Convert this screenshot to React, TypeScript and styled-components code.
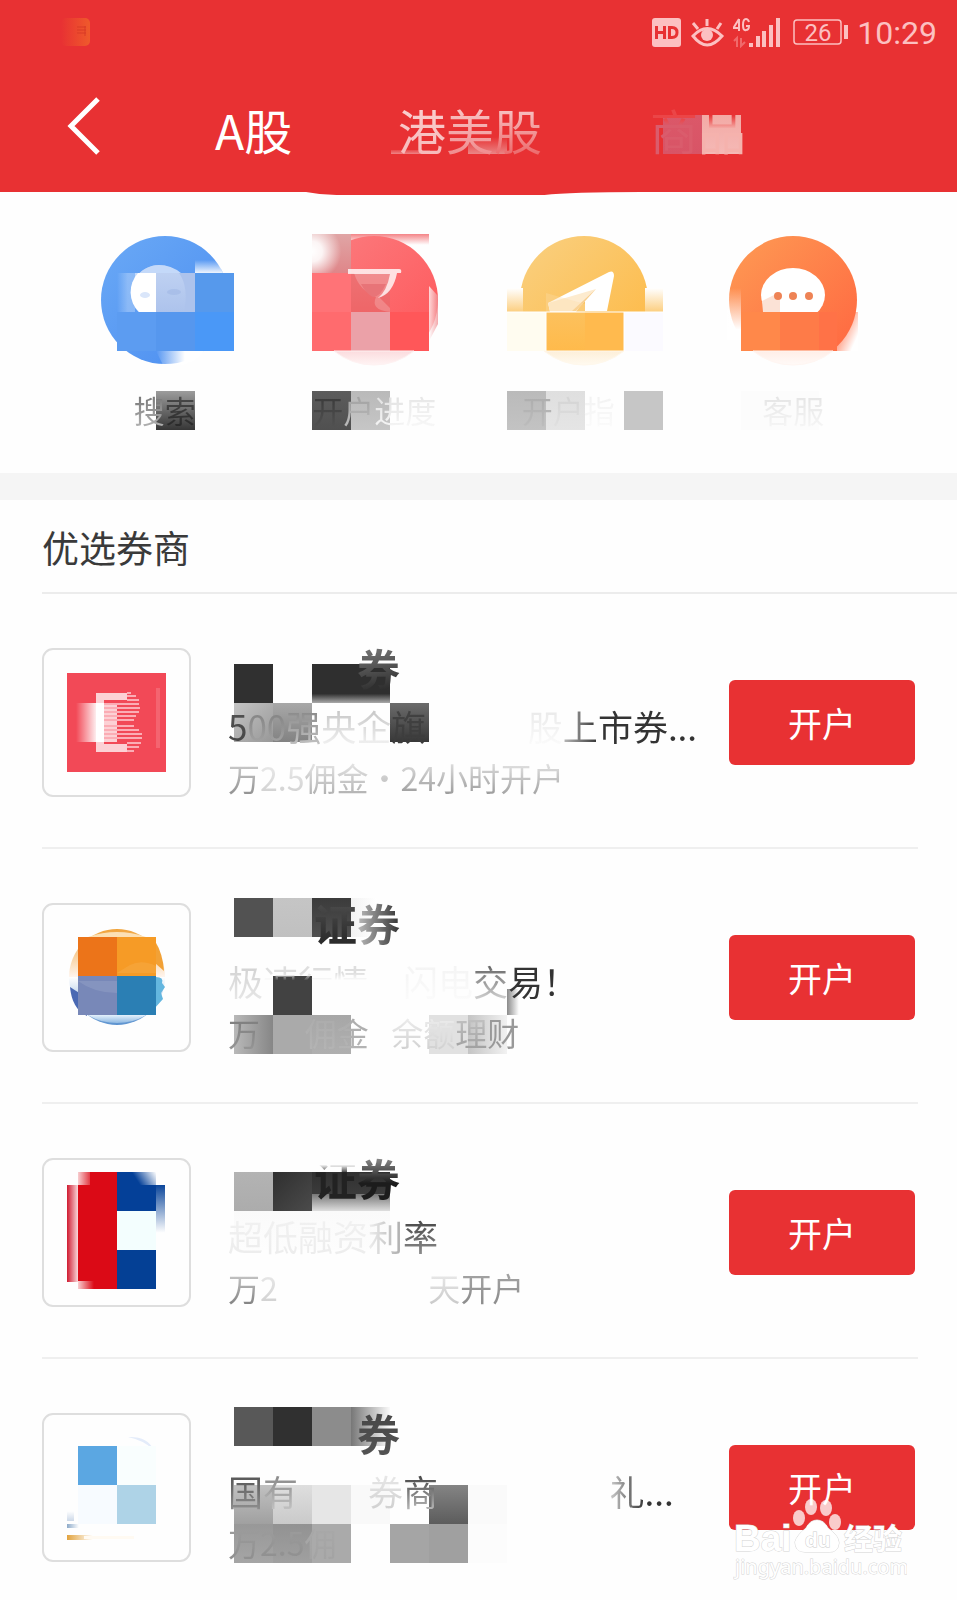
import React, { useId } from "react";
import styled, { createGlobalStyle } from "styled-components";

const RED = "#e83133";
const PALE = "#fcc0c1";

const GlobalStyle = createGlobalStyle`
  *, *::before, *::after { box-sizing: border-box; }
  body {
    margin: 0;
    background: #fefefe;
    color: #3a3a3a;
    font-family: "Noto Sans CJK SC", "Noto Sans", sans-serif;
    font-weight: 400;
  }
  button { font: inherit; border: 0; padding: 0; background: none; cursor: pointer; }
`;

const Page = styled.div`
  position: relative;
  overflow: hidden;
`;

const Header = styled.header`
  position: relative;
  background: ${RED};
  height: 192px;
`;

const StatusBar = styled.div`
  display: flex;
  align-items: center;
  justify-content: flex-end;
  height: 66px;
  padding: 0 20px 0 60px;
  color: ${PALE};
`;

const StatusLeft = styled.span`
  flex: 1;
  display: flex;
`;

const StatusIcon = styled.svg<{ $gap: number }>`
  flex: none;
  margin-right: ${(p) => p.$gap}px;
`;

const Clock = styled.time`
  font: 400 32px/40px Roboto, sans-serif;
`;

const Nav = styled.nav`
  display: flex;
  align-items: center;
  height: 126px;
  padding-left: 64px;
`;

const Back = styled.button`
  width: 38px;
  height: 60px;
  margin: 0 113px 8px 0;
  svg { display: block; }
`;

const Tab = styled.button<{ $color: string; $width: number }>`
  position: relative;
  width: ${(p) => p.$width}px;
  text-align: left;
  white-space: nowrap;
  font-size: 48px;
  line-height: 62px;
  color: ${(p) => p.$color};
`;

const Indicator = styled.svg`
  position: absolute;
  top: 100%;
  left: 32%;
  width: 35%;
  height: 3px;
`;

const Shortcuts = styled.section`
  display: grid;
  grid-template-columns: repeat(4, 1fr);
  padding: 44px 59px 43px 60px;
`;

const Shortcut = styled.button`
  display: flex;
  flex-direction: column;
  align-items: center;
  gap: 25px;
`;

const ShortcutArt = styled.svg`
  width: 128px;
  height: 128px;
  overflow: visible;
`;

const ShortcutLabel = styled.span`
  position: relative;
  font-size: 31px;
  line-height: 41px;
  white-space: nowrap;
`;

const Band = styled.div`
  height: 27px;
  background: #f5f5f5;
`;

const SectionTitle = styled.h2`
  margin: 0 0 0 42px;
  padding-top: 3px;
  border-bottom: 2px solid #ececec;
  font-size: 37px;
  font-weight: 400;
  line-height: 89px;
`;

const List = styled.ul`
  list-style: none;
  margin: 0;
  padding: 0 39px 0 42px;
`;

const Broker = styled.li`
  display: flex;
  align-items: flex-start;
  padding: 54px 3px 47px 0;
  border-bottom: 2px solid #efefef;
  &:last-child { border-bottom: 0; padding-bottom: 35px; }
`;

const LogoBox = styled.div`
  flex: none;
  width: 149px;
  height: 149px;
  border: 2px solid #dedede;
  border-radius: 11px;
  svg { display: block; overflow: visible; }
`;

const Info = styled.div`
  position: relative;
  flex: 1;
  min-width: 0;
  margin-left: 37px;
  white-space: nowrap;
`;

const Name = styled.h3`
  position: relative;
  margin: 0 0 12px;
  font-size: 43px;
  font-weight: 700;
  line-height: 38px;
`;

const Slogan = styled.p`
  position: relative;
  margin: 0;
  font-size: 35px;
  line-height: 56px;
`;

const Terms = styled.p`
  position: relative;
  margin: 0;
  font-size: 32px;
  line-height: 46px;
`;

const Shade = styled.span<{ $from: string; $to: string; $dir: string }>`
  position: relative;
  color: transparent;
  background: linear-gradient(${(p) => p.$dir}, ${(p) => p.$from}, ${(p) => p.$to});
  -webkit-background-clip: text;
  background-clip: text;
`;

const Blank = styled.span<{ $chars: number }>`
  display: inline-block;
  width: ${(p) => p.$chars}em;
`;

const OpenButton = styled.button`
  flex: none;
  width: 186px;
  height: 85px;
  margin-top: 32px;
  border-radius: 6px;
  background: ${RED};
  color: #fff;
  font-size: 34px;
  line-height: 84px;
`;

const MosaicArt = styled.svg`
  position: absolute;
  left: 0;
  top: 0;
  width: 1px;
  height: 1px;
  overflow: visible;
  pointer-events: none;
`;

const Watermark = styled.svg`
  position: absolute;
  right: 50px;
  bottom: 16px;
  width: 174px;
  height: 88px;
  pointer-events: none;
`;

/* x, y, width, height, start colour, end colour, gradient direction */
type Tile = [number, number, number, number, string, string?, ("down" | "right" | "diag")?];

function Tiles({ tiles }: { tiles: Tile[] }) {
  const id = useId();
  return (
    <g shapeRendering="crispEdges">
      {tiles.map(([x, y, w, h, from, to, dir = "down"], i) => (
        <g key={i}>
          {to && (
            <linearGradient
              id={`${id}${i}`}
              x1="0"
              y1="0"
              x2={dir === "down" ? "0" : "1"}
              y2={dir === "right" ? "0" : "1"}
            >
              <stop offset="0" stopColor={from} />
              <stop offset="1" stopColor={to} />
            </linearGradient>
          )}
          <rect x={x} y={y} width={w} height={h} fill={to ? `url(#${id}${i})` : from} />
        </g>
      ))}
    </g>
  );
}

function Mosaic({ tiles }: { tiles: Tile[] }) {
  return (
    <MosaicArt aria-hidden="true">
      <Tiles tiles={tiles} />
    </MosaicArt>
  );
}

/* A number leaves that many characters blank; a tuple is text with its shading. */
type Part = number | [string, string, string?, string?];

function Parts({ parts }: { parts: Part[] }) {
  return (
    <>
      {parts.map((p, i) =>
        typeof p === "number" ? (
          <Blank key={i} $chars={p} />
        ) : (
          <Shade key={i} $from={p[1]} $to={p[2] ?? p[1]} $dir={p[3] ?? "to bottom"}>
            {p[0]}
          </Shade>
        )
      )}
    </>
  );
}

function Grad({ id, from, to, diag = false, flat = false }: { id: string; from: string; to: string; diag?: boolean; flat?: boolean }) {
  return (
    <linearGradient id={id} x1="0" y1="0" x2={diag || flat ? "1" : "0"} y2={flat ? "0" : "1"}>
      <stop offset="0" stopColor={from} />
      <stop offset="1" stopColor={to} />
    </linearGradient>
  );
}

function SearchArt() {
  return (
    <ShortcutArt viewBox="0 0 128 128">
      <Grad id="s1" from="#6aa9f6" to="#4b8df0" diag />
      <linearGradient id="s2" x1="0" y1="0" x2="1" y2="0">
        <stop offset="0" stopColor="#fff" stopOpacity="0" />
        <stop offset="0.6" stopColor="#fff" />
      </linearGradient>
      <linearGradient id="s4" x1="0" y1="1" x2="0" y2="0">
        <stop offset="0" stopColor="#fff" stopOpacity="0.9" />
        <stop offset="1" stopColor="#fff" stopOpacity="0" />
      </linearGradient>
      <Grad id="s3" from="#d8e5fa" to="#adc3ec" />
      <circle cx="64" cy="64" r="64" fill="url(#s1)" />
      <path d="M16 37H34V76H16Z" fill="url(#s2)" opacity="0.28" />
      <circle cx="58" cy="57" r="28" fill="#a9c6f4" />
      <path d="M58 29A28 28 0 0 0 34 43V37H80Q70 29 58 29Z" fill="#c4d9f9" />
      <path d="M55 37V76H38A28 28 0 0 1 37 37Z" fill="#fff" />
      <ellipse cx="44" cy="59" rx="5" ry="3" fill="#dae6fa" />
      <path d="M94 24H116L122 37H94Z" fill="url(#s4)" />
      <Tiles tiles={[[94, 37, 39, 39, "#5699ec"], [16, 76, 39, 39, "#5c9cf1"], [55, 76, 39, 39, "#5697ee"], [94, 76, 39, 39, "#4a98f7"]]} />
      <path d="M55 37H94V76H55Z" fill="#adc3ec" />
      <path d="M55 37H78Q88 51 83 76H55Z" fill="url(#s3)" opacity="0.4" />
      <ellipse cx="73" cy="56" rx="7" ry="3" fill="#a4bbe7" opacity="0.7" />
      <path d="M55 115H103Q98 124 82 129H62Z" fill="url(#s2)" />
    </ShortcutArt>
  );
}

function ProgressArt() {
  return (
    <ShortcutArt viewBox="0 0 128 128">
      <Grad id="p1" from="#fb7d80" to="#ff5558" diag />
      <Grad id="p2" from="#ffffff" to="#f08c90" flat />
      <Grad id="p3" from="#fbdcde" to="#fff4f4" />
      <Grad id="p4" from="#e0a5a5" to="#df8689" />
      <Grad id="p5" from="#f48487" to="#ffffff" />
      <radialGradient id="p6" cx="0" cy="0.45" r="0.75">
        <stop offset="0" stopColor="#fff" />
        <stop offset="0.35" stopColor="#fff" stopOpacity="0.9" />
        <stop offset="1" stopColor="#fff" stopOpacity="0" />
      </radialGradient>
      <path d="M41 -2H119V9H41Z" fill="url(#p5)" />
      <circle cx="64" cy="64" r="64" fill="url(#p1)" />
      <path d="M0 36H2V90H0Z" fill="#fefefe" />
      <path d="M2 -2H41V37H2Z" fill="url(#p4)" />
      <path d="M2 -2H41V37H2Z" fill="url(#p6)" />
      <Tiles tiles={[[2, 37, 39, 39, "#ff7377"], [41, 37, 39, 39, "#ee7173", "#ee6668"], [2, 76, 39, 39, "#ff6b6e"], [41, 76, 39, 39, "#eba1a8"], [80, 76, 39, 39, "#ff5759"]]} />
      <path d="M38 33H89Q92 33 91 37H87Q83 57 69 61L80 72V76Q60 74 66 61Q49 54 44 37H38Z" fill="#fff" opacity="0.2" />
      <path d="M38 33H89Q92 33 91 37H87Q83 58 68 62Q77 55 80 38H38Z" fill="#fff" opacity="0.75" />
      <path d="M51 48H76Q70 61 63 61Q56 58 51 48Z" fill="#e87478" />
      <path d="M119 50L128 60V88L119 105Z" fill="url(#p2)" opacity="0.75" />
      <path d="M24 115H104A64 64 0 0 1 24 115Z" fill="url(#p3)" stroke="#fef2f2" />
    </ShortcutArt>
  );
}

function GuideArt() {
  return (
    <ShortcutArt viewBox="0 0 128 128">
      <Grad id="g1" from="#f9d081" to="#feb842" diag />
      <Grad id="g2" from="#fff" to="#fcce7f" />
      <Grad id="g3" from="#fdefd9" to="#fffaf0" />
      <circle cx="64" cy="64" r="64" fill="url(#g1)" />
      <path d="M-13 52H3V76H-13ZM125 52H143V76H125Z" fill="url(#g2)" />
      <path d="M28 67L89 36Q94 34 94 40L87 75H65V62L56 76H30Z" fill="#fff" />
      <path d="M28 67L76 53L56 75H30Z" fill="#fdebcf" />
      <path d="M76 53L56 75H52Z" fill="#f7cd8d" />
      <path d="M26 57V76H65V68Z" fill="#fddda5" opacity="0.35" />
      <Tiles tiles={[[-13, 76, 39, 39, "#fffcf0"], [26, 76, 39, 39, "#fcc15d", "#ffba4b"], [65, 76, 39, 39, "#ffba4e"], [104, 76, 39, 39, "#fbfaff"]]} />
      <path d="M-13 76H143M26 76V115M104 76V115" stroke="#fff" />
      <path d="M24 115H104A64 64 0 0 1 24 115Z" fill="url(#g3)" stroke="#fff8ec" />
    </ShortcutArt>
  );
}

function ServiceArt() {
  return (
    <ShortcutArt viewBox="0 0 128 128">
      <Grad id="c1" from="#fe9b54" to="#ff6540" diag />
      <linearGradient id="c2" x1="0" y1="0" x2="0" y2="1">
        <stop offset="0" stopColor="#fff" stopOpacity="0" />
        <stop offset="0.8" stopColor="#fff" />
      </linearGradient>
      <Grad id="c3" from="#ffeee7" to="#fffaf8" />
      <linearGradient id="c4" x1="0" y1="0" x2="1" y2="0.6">
        <stop offset="0.3" stopColor="#ff6b43" />
        <stop offset="1" stopColor="#fff" />
      </linearGradient>
      <path d="M100 76H129V115H100Z" fill="url(#c4)" />
      <circle cx="64" cy="64" r="64" fill="url(#c1)" />
      <path d="M-2 52H12V104H-2Z" fill="url(#c2)" />
      <ellipse cx="64" cy="59" rx="32" ry="27" fill="#fff" />
      <path d="M33 65L51 56V76H34Z" fill="#fbe2d6" />
      <Tiles tiles={[[12, 76, 39, 39, "#ff884a"], [51, 76, 39, 39, "#fe7b48"], [90, 76, 18, 39, "#ff7247"]]} />
      <g fill="#ee8355">
        <circle cx="49" cy="60" r="4" />
        <circle cx="64" cy="60" r="4" />
        <circle cx="80" cy="60" r="4" />
      </g>
      <path d="M24 115H104A64 64 0 0 1 24 115Z" fill="url(#c3)" stroke="#fff6f2" />
    </ShortcutArt>
  );
}

const shortcuts: { art: React.ReactNode; parts: Part[]; tiles: Tile[] }[] = [
  {
    art: <SearchArt />,
    parts: [["搜", "#666", "#bbb"], ["索", "#555", "#222"]],
    tiles: [[22, 2, 39, 39, "#9c9c9c", "#363636"]],
  },
  {
    art: <ProgressArt />,
    parts: [["开", "#333", "#555"], ["户", "#999", "#c0c0c0"], ["进", "#dcdcdc", "#f8f8f8"], ["度", "#e2e2e2", "#fafafa"]],
    tiles: [[0, 2, 39, 39, "#5c5c5c", "#505050"], [39, 2, 39, 39, "#b9b9b9", "#c6c6c6"]],
  },
  {
    art: <GuideArt />,
    parts: [["开", "#a8a8a8", "#bfbfbf"], ["户", "#d0d0d0", "#e2e2e2"], ["指", "#f0f0f0", "#fcfcfc"], 1],
    tiles: [[-15, 2, 39, 39, "#bababa", "#c3c3c3"], [24, 2, 39, 39, "#dfdfdf", "#e5e5e5"], [102, 2, 39, 39, "#c6c6c6"]],
  },
  {
    art: <ServiceArt />,
    parts: [["客服", "#e0e0e0", "#f8f8f8"]],
    tiles: [[-21, 2, 78, 39, "#fcfcfc"]],
  },
];

function RedLogo() {
  return (
    <svg width="145" height="145" viewBox="0 0 145 145">
      <linearGradient id="r1"><stop offset="0" stopColor="#fff" stopOpacity="0" /><stop offset="1" stopColor="#fff" stopOpacity="0.9" /></linearGradient>
      <path d="M23 23H122V122H23Z" fill="#f24957" />
      <path d="M32 53H52V92H32Z" fill="url(#r1)" />
      <path d="M112 38H116V98H112Z" fill="#fff" opacity="0.15" />
      <path d="M52 43H83V50H60V53H73V92H60V94H83V102H52Z" fill="#fff" opacity="0.75" />
      <path d="M52 53H60V92H52Z" fill="#fff" />
      <path d="M83 43H87M83 46H92M83 50H95M60 54H95M60 58H96M60 62H95M60 66H92M60 70H90M60 76H90M60 80H95M60 84H98M60 88H98M83 93H97M83 97H95M83 101H90" stroke="#fbadb5" strokeWidth="2" />
    </svg>
  );
}

function GlobeLogo() {
  return (
    <svg width="145" height="145" viewBox="0 0 145 145">
      <linearGradient id="b1" x1="0" y1="0" x2="0" y2="1"><stop offset="0" stopColor="#f0a33a" /><stop offset="0.5" stopColor="#fff5ee" /><stop offset="0.5" stopColor="#fff" /><stop offset="1" stopColor="#5b92cf" /></linearGradient>
      <linearGradient id="b2" x1="0" y1="0" x2="0" y2="1"><stop offset="0" stopColor="#e4f1fc" /><stop offset="1" stopColor="#8fb9e2" /></linearGradient>
      <circle cx="73" cy="72" r="48" fill="url(#b1)" />
      <path d="M44 32Q73 22 102 32Z" fill="#fce0b4" />
      <path d="M111 36Q119 49 120 66L111 58Z" fill="#f2a136" />
      <path d="M26 82Q28 104 43 111V93Z" fill="#4a69b3" />
      <path d="M112 72Q120 72 118 78L121 82L117 88L119 94L110 104Z" fill="#64b6df" />
      <Tiles tiles={[[34, 32, 39, 39, "#ec7419"], [73, 32, 39, 39, "#f69b26"], [34, 71, 39, 39, "#7888b8"], [73, 71, 39, 39, "#2b7fb4"]]} />
      <path d="M86 60Q98 54 112 61V68H73Z" fill="#f8ae50" opacity="0.4" />
      <path d="M34 76Q50 88 73 88V76Z" fill="#a5afd2" opacity="0.3" />
      <path d="M44 110H102Q90 118 73 118T44 110Z" fill="url(#b2)" />
    </svg>
  );
}

function FlagLogo() {
  return (
    <svg width="145" height="145" viewBox="0 0 145 145">
      <linearGradient id="f1" x1="0" y1="0.3" x2="1" y2="0"><stop offset="0.2" stopColor="#fff" stopOpacity="0" /><stop offset="1" stopColor="#fff" /></linearGradient>
      <linearGradient id="f2" x1="1" y1="0" x2="0" y2="0"><stop offset="0" stopColor="#fff" stopOpacity="0" /><stop offset="1" stopColor="#fff" stopOpacity="0.8" /></linearGradient>
      <Tiles tiles={[[23, 25, 11, 97, "#d01a30", "#f9d8da", "right"], [34, 12, 39, 117, "#db0a16"], [73, 12, 39, 39, "#044098"], [73, 51, 39, 39, "#f3fefe"], [73, 90, 39, 39, "#044095"], [112, 25, 9, 48, "#0b469b", "#fff"]]} />
      <path d="M84 12H112V25H84Z" fill="url(#f1)" />
      <path d="M34 12H46V25H34ZM34 121H50V129H34Z" fill="url(#f2)" />
    </svg>
  );
}

function BlueLogo() {
  return (
    <svg width="145" height="145" viewBox="0 0 145 145">
      <path d="M84 22Q103 21 110 35Q99 25 84 22Z" fill="#e4ecfa" />
      <Tiles tiles={[[34, 31, 39, 39, "#5ba7e2"], [73, 31, 39, 39, "#f9fefe"], [34, 70, 39, 39, "#f7fbff"], [73, 70, 39, 39, "#aed3e7"], [23, 96, 7, 10, "#fff", "#ccd8e8"], [23, 109, 12, 4, "#8daac9", "#fff", "right"], [23, 120, 26, 5, "#e2a33e", "#fff", "right"], [40, 121, 50, 3, "#fffaf2"]]} />
    </svg>
  );
}

type BrokerData = { logo: React.ReactNode; tiles: Tile[]; name: Part[]; slogan: Part[]; terms: Part[] };

const brokers: BrokerData[] = [
  {
    logo: <RedLogo />,
    tiles: [
      [6, 16, 39, 39, "#303030"],
      [84, 16, 78, 30, "#2f2f2f"],
      [84, 46, 78, 9, "#333", "#aaa"],
      [6, 55, 39, 39, "#c4c4c4", "#989898", "diag"],
      [45, 55, 39, 39, "#a8a8a8", "#828282"],
      [162, 55, 39, 39, "#6b6b6b", "#383838"],
    ],
    name: [3, ["券", "#8a8a8a", "#1c1c1c", "170deg"]],
    slogan: [["5", "#555", "#444"], ["00", "#777", "#aaa"], ["强", "#777", "#ccc"], ["央企", "#bbb", "#f8f8f8"], ["旗", "#444", "#3a3a3a"], 2.9, ["股", "#e4e4e4", "#fefefe"], ["上", "#bbb", "#333", "to right"], ["市券...", "#333"]],
    terms: [["万", "#ddd", "#888"], ["2.5", "#f2f2f2", "#ccc"], ["佣金·", "#f2f2f2", "#aaa"], ["24小时", "#f0f0f0", "#909090"], ["开户", "#f4f4f4", "#999"]],
  },
  {
    logo: <GlobeLogo />,
    tiles: [
      [6, -5, 39, 39, "#525252"],
      [45, -5, 39, 39, "#c5c5c5", "#c0c0c0"],
      [84, -5, 39, 39, "#3b3b3b", "#505050"],
      [123, -5, 26, 39, "#f2f2f2", "#ffffff", "right"],
      [45, 73, 39, 39, "#424242"],
      [279, 86, 12, 26, "#8a8a8a", "#ffffff", "right"],
      [6, 112, 39, 39, "#b9b9b9", "#868686", "right"],
      [45, 112, 39, 39, "#aaa"],
      [84, 112, 39, 39, "#a7a7a7", "#afafaf"],
      [201, 112, 39, 39, "#e1e1e1"],
      [240, 112, 39, 39, "#c4c4c4", "#f2f2f2", "right"],
    ],
    name: [2, ["证", "#555", "#222"], ["券", "#bbb", "#333", "to right"]],
    slogan: [["极", "#ccc", "#eaeaea"], ["速行情", "#dedede 35%", "transparent 50%"], 1, ["闪电", "#f2f2f2", "#fcfcfc"], ["交", "#444", "#e6e6e6"], ["易！", "#333"]],
    terms: [["万", "#777", "#999"], 1.4, ["佣金", "#aaa", "#b5b5b5"], 0.7, ["余额", "#f4f4f4", "#ccc"], ["理", "#ccc", "#999"], ["财", "#999"]],
  },
  {
    logo: <FlagLogo />,
    tiles: [
      [6, 14, 39, 39, "#b3b3b3", "#acacac"],
      [45, 14, 39, 39, "#2f2f2f", "#4b4b4b", "diag"],
      [84, 14, 78, 22, "#303030", "#3b3b3b"],
      [84, 36, 78, 17, "#777", "#dedede"],
      [6, 53, 156, 39, "#fafafa", "#fdfdfd"],
    ],
    name: [2, ["证", "transparent 30%", "#222 45%"], ["券", "#c0c0c0", "#1c1c1c 60%"]],
    slogan: [["超低融资", "#f2f2f2", "#ececec"], ["利", "#f0f0f0", "#aaa", "to right"], ["率", "#333", "#999"]],
    terms: [["万", "#ddd", "#777"], ["2", "#f0f0f0", "#ccc"], 4.7, ["天", "#f2f2f2", "#c4c4c4"], ["开户", "#aaa", "#888"]],
  },
  {
    logo: <BlueLogo />,
    tiles: [
      [6, -6, 39, 39, "#585858"],
      [45, -6, 39, 39, "#303030"],
      [84, -6, 39, 39, "#8c8c8c"],
      [123, -6, 39, 39, "#777", "#fafafa", "right"],
      [6, 72, 39, 39, "#c1c1c1", "#a0a0a0"],
      [45, 72, 39, 39, "#dedede", "#cacaca"],
      [84, 72, 39, 39, "#e6e6e6"],
      [123, 72, 39, 39, "#f9f9f9"],
      [201, 72, 39, 39, "#848484", "#5c5c5c"],
      [240, 72, 39, 39, "#fafafa"],
      [6, 111, 39, 39, "#989898", "#a5a5a5"],
      [45, 111, 39, 39, "#929292", "#a0a0a0"],
      [84, 111, 39, 39, "#aaa"],
      [162, 111, 39, 39, "#a5a5a5"],
      [201, 111, 39, 39, "#a0a0a0"],
      [240, 111, 39, 39, "#fcfcfc"],
    ],
    name: [3, ["券", "#444", "#555"]],
    slogan: [["国", "#444", "#999"], ["有", "#777", "#ccc"], 2, ["券", "#eee", "#ccc"], ["商", "#222", "#ccc"], 4.9, ["礼", "#ccc", "#333", "to right"], ["...", "#333"]],
    terms: [["万2.5", "#a0a0a0", "#8d8d8d"], ["佣", "#aaa", "#a2a2a2"]],
  },
];

function StatusIcons() {
  return (
    <>
      <StatusIcon width="30" height="30" $gap={9} role="img" aria-label="HD">
        <rect width="29" height="29" rx="3" fill={PALE} />
        <path d="M4.500 8V21M12.500 8V21M4.500 14.500H12.500M17.500 9.500V19.500H20Q25 19.500 25 14.500T20 9.500Z" fill="none" stroke={RED} strokeWidth="3" />
      </StatusIcon>
      <StatusIcon width="34" height="30" $gap={8} aria-hidden="true" fill="none" stroke={PALE} strokeWidth="3">
        <path d="M2 18Q16 3 31 18Q16 36 2 18ZM16 8V1M7 11L2 5M26 11L30 5" />
        <circle cx="16" cy="17" r="6" fill={PALE} stroke="none" />
      </StatusIcon>
      <StatusIcon width="48" height="30" $gap={12} role="img" aria-label="4G" fill={PALE}>
        <path d="M6 1L1 9V10H7M6 1V13M16 4Q15 1 13 1Q10 1 10 7T13 12Q16 12 16 8H13" fill="none" stroke={PALE} strokeWidth="2" />
        <path d="M1 23L4 20V29M8 20V28L12 24" fill="none" stroke={PALE} strokeWidth="2" opacity="0.4" />
        <path d="M16 25H20V29H16ZM23 18H27V29H23ZM29 13H33V29H29ZM36 7H40V29H36ZM43 0H47V29H43Z" />
      </StatusIcon>
      <StatusIcon width="56" height="28" $gap={8} role="img" aria-label="26%">
        <rect x="1" y="1" width="47" height="24" rx="3" fill="none" stroke={PALE} strokeWidth="1.500" />
        <path d="M51 6H55V20H51Z" fill={PALE} />
        <text x="25" y="22" textAnchor="middle" fill={PALE} fontFamily="Roboto" fontSize="24" fontWeight="400">26</text>
      </StatusIcon>
    </>
  );
}

export default function App() {
  return (
    <Page>
      <GlobalStyle />
      <Header>
        <StatusBar>
          <StatusLeft>
            <svg width="32" height="30" aria-hidden="true">
              <Grad id="n1" from={RED} to="#ef5a2b" flat />
              <rect x="1" y="0" width="29" height="28" rx="5" fill="url(#n1)" />
              <path d="M17 9H26M17 12H26M17 15H26M25 8V18" stroke="#d93b26" />
            </svg>
          </StatusLeft>
          <StatusIcons />
          <Clock>10:29</Clock>
        </StatusBar>
        <Nav>
          <Back aria-label="返回">
            <svg width="38" height="60" fill="none" stroke="#fff" strokeWidth="5">
              <path d="M34 4L7 31L34 58" />
            </svg>
          </Back>
          <Tab $color="#fff" $width={183}>A股</Tab>
          <Tab $color="#f9c4c4" $width={252}>
            <Mosaic tiles={[[-7, 52, 39, 4, "#e9484a", "#ef8587"], [70, 39, 39, 17, "#e83133", "#ea8585"]]} />
            <Parts parts={[["港", "#fbd5d5", "#f6b5b5"], ["美", "#fbd5d5", "#ee8183"], ["股", "#fbe0e0", "#ea5759"]]} />
          </Tab>
          <Tab $color="#ee6b6c" $width={120}>
            <Mosaic tiles={[[13, 17, 39, 39, "#db5869", "#d85466"], [52, 17, 39, 39, "#f3aaa5", "#f5b9b6"]]} />
            <Parts parts={[["商", "#eb4547 35%", "#da5c6c 45%"], ["品", "#e83133 30%", "#f5b2ad 50%"]]} />
          </Tab>
        </Nav>
        <Indicator viewBox="0 0 330 3" preserveAspectRatio="none">
          <path d="M0 0H330Q260 0 235 3H30Q15 3 0 0Z" fill={RED} />
        </Indicator>
      </Header>
      <main>
        <Shortcuts>
          {shortcuts.map((s, i) => (
            <Shortcut key={i}>
              {s.art}
              <ShortcutLabel>
                <Mosaic tiles={s.tiles} />
                <Parts parts={s.parts} />
              </ShortcutLabel>
            </Shortcut>
          ))}
        </Shortcuts>
        <Band />
        <SectionTitle>优选券商</SectionTitle>
        <List>
          {brokers.map((b, i) => (
            <Broker key={i}>
              <LogoBox>{b.logo}</LogoBox>
              <Info>
                <Mosaic tiles={b.tiles} />
                <Name><Parts parts={b.name} /></Name>
                <Slogan><Parts parts={b.slogan} /></Slogan>
                <Terms><Parts parts={b.terms} /></Terms>
              </Info>
              <OpenButton>开户</OpenButton>
            </Broker>
          ))}
        </List>
      </main>
      <Watermark viewBox="0 0 174 88" fill="#fff" stroke="#d4d4d4" strokeWidth="1" paintOrder="stroke">
        <g fillOpacity="0.75" stroke="none">
          <ellipse cx="66" cy="22" rx="6" ry="8" />
          <ellipse cx="78" cy="11" rx="6" ry="8" />
          <ellipse cx="93" cy="12" rx="6" ry="8" />
          <ellipse cx="102" cy="26" rx="6" ry="8" />
        </g>
        <path d="M84 24Q91 24 95 32Q106 40 106 47Q105 57 95 56H72Q62 56 62 46Q64 39 73 32Q77 24 84 24Z" />
        <g fontFamily="Liberation Sans" fontWeight="700">
          <text x="1" y="55" fontSize="37">Bai</text>
          <text x="72" y="51" fontSize="21" stroke="#ccc">du</text>
        </g>
        <text x="2" y="78" fontFamily="Noto Sans" fontWeight="400" fontSize="20">jingyan.baidu.com</text>
        <text x="111" y="54" fontFamily="Noto Sans CJK SC" fontWeight="700" fontSize="29">经验</text>
      </Watermark>
    </Page>
  );
}
